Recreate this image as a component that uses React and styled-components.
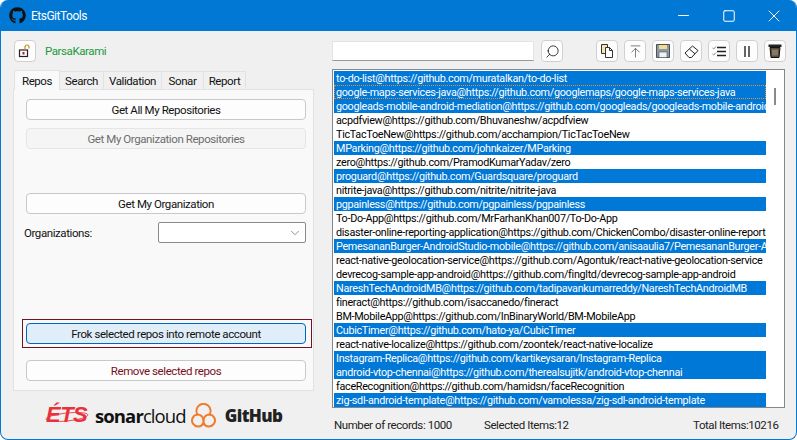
import React from 'react';
import styled, { createGlobalStyle } from 'styled-components';
import { FaGithub } from 'react-icons/fa';
import { ChevronDown, Search, Minus, Square, X, ArrowUpToLine } from 'lucide-react';

const Global = createGlobalStyle`
  html, body { margin: 0; padding: 0; background: #fff; }
  body { font-family: Roboto, "Noto Sans", sans-serif; font-size: 11.5px; letter-spacing: -0.42px; color: #111; }
`;

const Win = styled.div`
  width: 797px;
  height: 440px;
  box-sizing: border-box;
  background: #f0f0f0;
  border: 1px solid #0078d4;
  border-top: none;
  border-radius: 8px;
  overflow: hidden;
  display: flex;
  flex-direction: column;
`;

const TitleBar = styled.div`
  height: 31px;
  flex: none;
  background: #0078d4;
  color: #fff;
  display: flex;
  align-items: center;
  padding-left: 8px;
  font-size: 12px;
  letter-spacing: -0.5px;
`;

const TitleText = styled.span`
  margin-left: 5px;
  flex: 1;
`;

const WinBtn = styled.div`
  width: 45px;
  height: 31px;
  display: flex;
  align-items: center;
  justify-content: center;
`;

const Body = styled.div`
  flex: 1;
  display: grid;
  grid-template-columns: 317px 1fr;
  min-height: 0;
`;

const Left = styled.div`
  padding: 9px 0 0 12px;
  display: flex;
  flex-direction: column;
`;

const UserRow = styled.div`
  display: flex;
  align-items: center;
  gap: 9px;
  padding-left: 1px;
  height: 22px;
  color: #1a9a3a;
`;

const IconBtn = styled.button`
  width: 22px;
  height: 22px;
  padding: 0;
  flex: none;
  box-sizing: border-box;
  background: #fdfdfd;
  border: 1px solid #d0d0d0;
  border-radius: 4px;
  display: flex;
  align-items: center;
  justify-content: center;
`;

const Tabs = styled.div`
  display: flex;
  align-items: flex-end;
  height: 20px;
  margin-top: 7px;
  padding-left: 1px;
`;

const Tab = styled.div`
  height: ${p => (p.$active ? 20 : 18)}px;
  width: ${p => p.$w}px;
  box-sizing: border-box;
  background: ${p => (p.$active ? '#f9f9f9' : '#f0f0f0')};
  border: 1px solid #e2e2e2;
  border-bottom: none;
  margin-right: -1px;
  display: flex;
  align-items: center;
  justify-content: center;
  position: relative;
  z-index: ${p => (p.$active ? 1 : 0)};
  margin-bottom: ${p => (p.$active ? -1 : 0)}px;
`;

const Panel = styled.div`
  width: 301px;
  height: 302px;
  box-sizing: border-box;
  background: #f9f9f9;
  border: 1px solid #e2e2e2;
  padding: 9px 0 0 12px;
  display: flex;
  flex-direction: column;
`;

const Btn = styled.button`
  width: 280px;
  height: 21px;
  padding: 0;
  flex: none;
  box-sizing: border-box;
  font: inherit;
  letter-spacing: inherit;
  color: ${p => p.$color || '#111'};
  background: ${p => (p.$focus ? '#e0eef9' : p.$disabled ? '#f5f5f5' : '#fdfdfd')};
  border: 1px solid ${p => (p.$focus ? '#0067c0' : p.$disabled ? '#e5e5e5' : '#c8c8c8')};
  border-radius: 4px;
  margin-top: ${p => p.$mt || 0}px;
`;

const ComboRow = styled.div`
  display: flex;
  align-items: center;
  justify-content: space-between;
  width: 282px;
  margin-top: 8px;
  margin-left: -2px;
`;

const Combo = styled.div`
  width: 148px;
  height: 21px;
  box-sizing: border-box;
  background: #fff;
  border: 1px solid #8a8a8a;
  border-radius: 2px;
  display: flex;
  align-items: center;
  justify-content: flex-end;
  padding-right: 3px;
  color: #666;
`;

const FocusRing = styled.div`
  width: 290px;
  height: 29px;
  margin: 76px 0 0 -4px;
  padding-left: 3px;
  box-sizing: border-box;
  border: 1px solid #7a0f22;
  display: flex;
  align-items: center;
  flex: none;
`;

const Logos = styled.div`
  display: flex;
  align-items: center;
  margin: 11px 0 0 33px;
  height: 26px;
`;

const EtsWrap = styled.span`
  position: relative;
  display: inline-block;
  width: 42px;
`;

const EtsLogo = styled.span`
  font-family: "Liberation Sans", sans-serif;
  font-style: italic;
  font-weight: 700;
  font-size: 22px;
  letter-spacing: -0.5px;
  color: #e8323c;
`;

const EtsOrbit = styled.svg`
  position: absolute;
  left: -1px;
  top: 8px;
`;

const SonarLogo = styled.span`
  margin-left: 7px;
  font-family: "Open Sans", sans-serif;
  font-size: 18.5px;
  letter-spacing: -0.9px;
  color: #111;
`;

const SonarBold = styled.b`
  font-weight: 700;
`;

const CloudWrap = styled.span`
  display: flex;
  margin-left: 5px;
`;

const GithubLogo = styled.span`
  margin-left: 9px;
  font-family: "Open Sans", sans-serif;
  font-weight: 800;
  font-size: 17px;
  letter-spacing: -0.6px;
  color: #222;
`;

const Right = styled.div`
  padding: 9px 0 0 14px;
  display: flex;
  flex-direction: column;
`;

const Toolbar = styled.div`
  display: flex;
  align-items: center;
  height: 22px;
`;

const SearchInput = styled.div`
  width: 202px;
  height: 20px;
  background: #fff;
  border: 1px solid #e3e3e3;
  border-bottom-color: #999;
  box-sizing: border-box;
  margin-right: 7px;
`;

const Tools = styled.div`
  display: flex;
  margin-left: 33px;
  gap: 6px;
`;

const List = styled.div`
  width: 453px;
  height: 339px;
  margin-top: 7px;
  box-sizing: border-box;
  background: #fff;
  border: 1px solid #828790;
  padding: 1px;
  position: relative;
`;

const Row = styled.div`
  width: 432px;
  height: 14px;
  line-height: 15px;
  padding-left: 2px;
  box-sizing: border-box;
  font-size: 10.8px;
  letter-spacing: -0.3px;
  white-space: nowrap;
  overflow: hidden;
  background: ${p => (p.$sel ? '#0078d7' : '#fff')};
  color: ${p => (p.$sel ? '#fff' : '#000')};
  ${p => p.$focus && 'outline: 1px dotted #f58a1f; outline-offset: -1px;'}
`;

const Thumb = styled.div`
  position: absolute;
  right: 8px;
  top: 18px;
  width: 2px;
  height: 17px;
  background: #8a8a8a;
`;

const Status = styled.div`
  display: flex;
  height: 33px;
  align-items: center;
  padding-left: 2px;
  color: #222;
`;

const StatusItem = styled.span`
  width: ${p => p.$w}px;
`;

const rows = [
  ['to-do-list@https://github.com/muratalkan/to-do-list', 1],
  ['google-maps-services-java@https://github.com/googlemaps/google-maps-services-java', 1, 1],
  ['googleads-mobile-android-mediation@https://github.com/googleads/googleads-mobile-android-mediation', 1],
  ['acpdfview@https://github.com/Bhuvaneshw/acpdfview'],
  ['TicTacToeNew@https://github.com/acchampion/TicTacToeNew'],
  ['MParking@https://github.com/johnkaizer/MParking', 1],
  ['zero@https://github.com/PramodKumarYadav/zero'],
  ['proguard@https://github.com/Guardsquare/proguard', 1],
  ['nitrite-java@https://github.com/nitrite/nitrite-java'],
  ['pgpainless@https://github.com/pgpainless/pgpainless', 1],
  ['To-Do-App@https://github.com/MrFarhanKhan007/To-Do-App'],
  ['disaster-online-reporting-application@https://github.com/ChickenCombo/disaster-online-reporting-application'],
  ['PemesananBurger-AndroidStudio-mobile@https://github.com/anisaaulia7/PemesananBurger-AndroidStudio-mobile', 1],
  ['react-native-geolocation-service@https://github.com/Agontuk/react-native-geolocation-service'],
  ['devrecog-sample-app-android@https://github.com/fingltd/devrecog-sample-app-android'],
  ['NareshTechAndroidMB@https://github.com/tadipavankumarreddy/NareshTechAndroidMB', 1],
  ['fineract@https://github.com/isaccanedo/fineract'],
  ['BM-MobileApp@https://github.com/InBinaryWorld/BM-MobileApp'],
  ['CubicTimer@https://github.com/hato-ya/CubicTimer', 1],
  ['react-native-localize@https://github.com/zoontek/react-native-localize'],
  ['Instagram-Replica@https://github.com/kartikeysaran/Instagram-Replica', 1],
  ['android-vtop-chennai@https://github.com/therealsujitk/android-vtop-chennai', 1],
  ['faceRecognition@https://github.com/hamidsn/faceRecognition'],
  ['zig-sdl-android-template@https://github.com/vamolessa/zig-sdl-android-template', 1],
];

const LockIcon = () => (
  <svg width="14" height="14" viewBox="0 0 14 14" fill="none">
    <rect x="1.5" y="6" width="8" height="6.5" stroke="#222" strokeWidth="1.2" />
    <rect x="4.5" y="8" width="2" height="2.5" fill="#c8102e" />
    <path d="M7 6V3a2 2 0 0 1 4 0v1.5" stroke="#c98a1a" strokeWidth="1.2" />
  </svg>
);

const CopyIcon = () => (
  <svg width="16" height="16" viewBox="0 0 16 16" fill="none">
    <path d="M2.5 1.5h6v9h-6z" fill="#fbe2b0" stroke="#333" />
    <path d="M6.5 4.5h4l3 3v7h-7z" fill="#fff" stroke="#333" />
    <path d="M10.5 4.5v3h3" stroke="#333" />
  </svg>
);

const SaveIcon = () => (
  <svg width="14" height="14" viewBox="0 0 14 14" fill="none">
    <path d="M.5.5h13v13H.5z" fill="#8f99a6" stroke="#4a5058" />
    <rect x="3" y="1" width="8" height="4" fill="#f3dc8e" />
    <rect x="3" y="8" width="8" height="5.5" fill="#eef2f6" stroke="#555" strokeWidth=".6" />
  </svg>
);

const EraserIcon = () => (
  <svg width="15" height="15" viewBox="0 0 15 15" fill="none">
    <path d="M1 9 8.5 2l5.5 4.5-6.5 7H5z" fill="#fff" stroke="#222" />
    <path d="M5.5 5.2 11 9.8" stroke="#222" />
  </svg>
);

const CheckListIcon = () => (
  <svg width="15" height="13" viewBox="0 0 15 13" fill="none">
    <path d="M5 2.5h9M5 6.5h9M5 10.5h9" stroke="#222" strokeWidth="1.4" />
    <path d="M0.5 3l1.2 1L4 1.5M0.5 9l1.2 1L4 7.5" stroke="#777" strokeWidth=".9" />
  </svg>
);

const PauseIcon = () => (
  <svg width="8" height="11" viewBox="0 0 8 11" fill="none">
    <path d="M2 0v11M6 0v11" stroke="#333" strokeWidth="1.5" />
  </svg>
);

const TrashIcon = () => (
  <svg width="14" height="14" viewBox="0 0 14 14" fill="none">
    <rect x="0.5" y="0.5" width="13" height="2.5" fill="#222" />
    <path d="M2 3.5h10l-1 10H3z" fill="#5a4a3a" stroke="#111" />
    <path d="M5 5.5v6M7 5.5v6M9 5.5v6" stroke="#c8c0b0" strokeWidth=".8" />
  </svg>
);

const CloudIcon = () => (
  <svg width="25" height="25" viewBox="0 0 25 25" fill="none" stroke="#ef7c2e" strokeWidth="2" strokeLinecap="round">
    <path d="M6.5 11.5A7 7 0 1 1 18.5 11.5A6 6 0 1 1 12.5 20A6 6 0 1 1 6.5 11.5" />
    <path d="M6.5 11.5a6 6 0 0 1 6 6v2.5" />
    <path d="M18.5 11.5a6 6 0 0 0 -6 6" />
  </svg>
);

export default function App() {
  return (
    <Win>
      <Global />
      <TitleBar>
        <FaGithub size={17} color="#111" />
        <TitleText>EtsGitTools</TitleText>
        <WinBtn><Minus size={17} color="#fff" strokeWidth={1} absoluteStrokeWidth /></WinBtn>
        <WinBtn><Square size={14} color="#fff" strokeWidth={1} absoluteStrokeWidth /></WinBtn>
        <WinBtn><X size={20} color="#fff" strokeWidth={1} absoluteStrokeWidth /></WinBtn>
      </TitleBar>
      <Body>
        <Left>
          <UserRow>
            <IconBtn><LockIcon /></IconBtn>
            ParsaKarami
          </UserRow>
          <Tabs>
            <Tab $active $w={46}>Repos</Tab>
            <Tab $w={45}>Search</Tab>
            <Tab $w={59}>Validation</Tab>
            <Tab $w={43}>Sonar</Tab>
            <Tab $w={43}>Report</Tab>
          </Tabs>
          <Panel>
            <Btn>Get All My Repositories</Btn>
            <Btn $disabled $color="#6d6d6d" $mt={8}>Get My Organization Repositories</Btn>
            <Btn $mt={44}>Get My Organization</Btn>
            <ComboRow>
              Organizations:
              <Combo><ChevronDown size={14} strokeWidth={1.2} /></Combo>
            </ComboRow>
            <FocusRing><Btn $focus>Frok selected repos into remote account</Btn></FocusRing>
            <Btn $color="#7a0f22" $mt={12}>Remove selected repos</Btn>
          </Panel>
          <Logos>
            <EtsWrap>
              <EtsLogo>ÉTS</EtsLogo>
              <EtsOrbit width="44" height="14" viewBox="0 0 44 14" fill="none">
                <ellipse cx="22" cy="7" rx="21" ry="4" stroke="#e8323c" strokeWidth=".8" transform="rotate(-6 22 7)" />
              </EtsOrbit>
            </EtsWrap>
            <SonarLogo><SonarBold>sonar</SonarBold>cloud</SonarLogo>
            <CloudWrap><CloudIcon /></CloudWrap>
            <GithubLogo>GitHub</GithubLogo>
          </Logos>
        </Left>
        <Right>
          <Toolbar>
            <SearchInput />
            <IconBtn><Search size={15} strokeWidth={1.2} style={{ transform: 'scaleX(-1)' }} /></IconBtn>
            <Tools>
              <IconBtn><CopyIcon /></IconBtn>
              <IconBtn><ArrowUpToLine size={15} color="#555" strokeWidth={1.2} /></IconBtn>
              <IconBtn><SaveIcon /></IconBtn>
              <IconBtn><EraserIcon /></IconBtn>
              <IconBtn><CheckListIcon /></IconBtn>
              <IconBtn><PauseIcon /></IconBtn>
              <IconBtn><TrashIcon /></IconBtn>
            </Tools>
          </Toolbar>
          <List>
            {rows.map(([text, sel, focus]) => (
              <Row key={text} $sel={sel} $focus={focus}>{text}</Row>
            ))}
            <Thumb />
          </List>
          <Status>
            <StatusItem $w={150}>Number of records: 1000</StatusItem>
            <StatusItem $w={209}>Selected Items:12</StatusItem>
            <span>Total Items:10216</span>
          </Status>
        </Right>
      </Body>
    </Win>
  );
}
